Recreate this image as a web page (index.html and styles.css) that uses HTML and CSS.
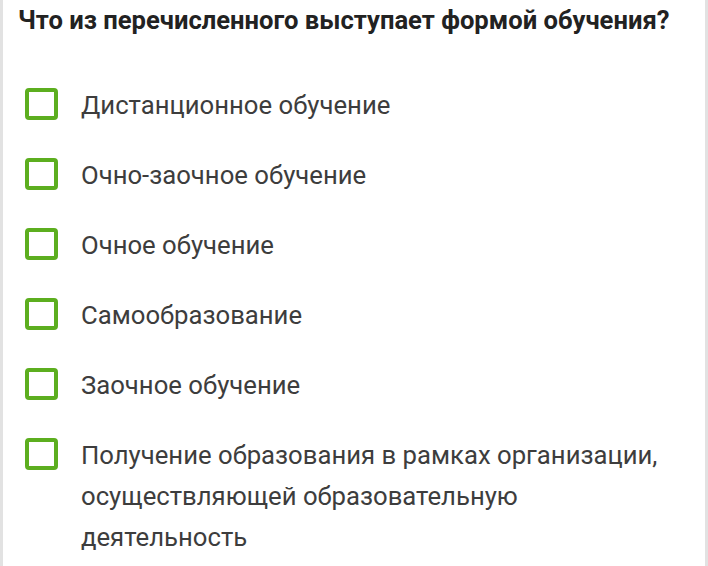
FILE: index.html
```html
<!DOCTYPE html>
<html lang="ru">
<head>
<meta charset="utf-8">
<link rel="stylesheet" href="styles.css">
</head>
<body>
<div class="card">
  <h1 class="question">Что из перечисленного выступает формой обучения?</h1>
  <ul class="options">
    <li class="option"><span class="box"></span><span class="label">Дистанционное обучение</span></li>
    <li class="option"><span class="box"></span><span class="label">Очно-заочное обучение</span></li>
    <li class="option"><span class="box"></span><span class="label">Очное обучение</span></li>
    <li class="option"><span class="box"></span><span class="label">Самообразование</span></li>
    <li class="option"><span class="box"></span><span class="label">Заочное обучение</span></li>
    <li class="option"><span class="box"></span><span class="label">Получение образования в рамках организации, осуществляющей образовательную деятельность</span></li>
  </ul>
</div>
</body>
</html>
```

FILE: styles.css
```css
html, body {
  margin: 0;
  padding: 0;
  background: #ffffff;
}
.card {
  box-sizing: border-box;
  width: 708px;
  height: 566px;
  border-left: 3px solid #e2e2e2;
  border-right: 3px solid #e2e2e2;
  padding: 4px 0 0 15px;
  font-family: Roboto, "Noto Sans", sans-serif;
  overflow: hidden;
}
.question {
  margin: 0;
  font-size: 25.6px;
  font-weight: 700;
  line-height: 32px;
  color: #222222;
}
.options {
  list-style: none;
  margin: 49px 0 0 0;
  padding: 0;
  display: flex;
  flex-direction: column;
  gap: 29px;
}
.option {
  display: flex;
  align-items: flex-start;
  gap: 23px;
  padding-left: 7px;
}
.box {
  flex: none;
  box-sizing: border-box;
  width: 33px;
  height: 32px;
  border: 4px solid #5cae1f;
  border-radius: 4px;
  margin-top: 3px;
}
.label {
  font-size: 25.7px;
  line-height: 41px;
  color: #3d3d3d;
  max-width: 595px;
}
```
